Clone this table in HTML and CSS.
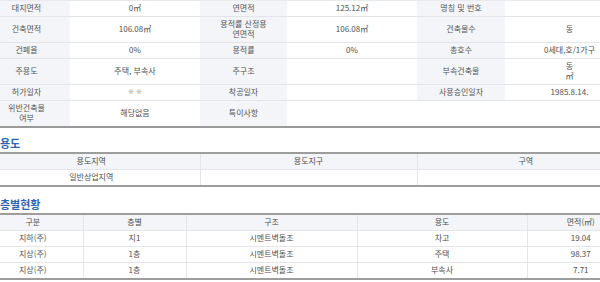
FILE: index.html
```html
<!DOCTYPE html>
<html lang="ko">
<head>
<meta charset="utf-8">
<link rel="stylesheet" href="styles.css">
</head>
<body>
<div class="page">
  <table class="info">
    <colgroup>
      <col class="c87"><col class="c130"><col class="c87"><col class="c130"><col class="c88"><col class="c129">
    </colgroup>
    <tr>
      <th>대지면적</th><td>0㎡</td><th>연면적</th><td>125.12㎡</td><th>명칭 및 번호</th><td></td>
    </tr>
    <tr>
      <th>건축면적</th><td>106.08㎡</td><th>용적률 산정용<br>연면적</th><td>106.08㎡</td><th>건축물수</th><td>동</td>
    </tr>
    <tr>
      <th>건폐율</th><td>0%</td><th>용적률</th><td>0%</td><th>총호수</th><td>0세대,호/1가구</td>
    </tr>
    <tr>
      <th>주용도</th><td>주택, 부속사</td><th>주구조</th><td></td><th>부속건축물</th><td>동<br>㎡</td>
    </tr>
    <tr>
      <th>허가일자</th><td class="mark">※ ※</td><th>착공일자</th><td></td><th>사용승인일자</th><td>1985.8.14.</td>
    </tr>
    <tr>
      <th>위반건축물<br>여부</th><td>해당없음</td><th>특이사항</th><td class="blank" colspan="3"></td>
    </tr>
  </table>

  <h2 class="sec first">용도</h2>
  <table class="grid">
    <colgroup><col class="c217"><col class="c217"><col class="c217"></colgroup>
    <tr class="head"><th>용도지역</th><th>용도지구</th><th>구역</th></tr>
    <tr><td>일반상업지역</td><td></td><td></td></tr>
  </table>

  <h2 class="sec">층별현황</h2>
  <table class="grid floors">
    <colgroup><col class="c100"><col class="c103"><col class="c171"><col class="c170"><col class="c107"></colgroup>
    <tr class="head"><th>구분</th><th>층별</th><th>구조</th><th>용도</th><th>면적(㎡)</th></tr>
    <tr><td>지하(주)</td><td>지1</td><td>시멘트벽돌조</td><td>차고</td><td>19.04</td></tr>
    <tr><td>지상(주)</td><td>1층</td><td>시멘트벽돌조</td><td>주택</td><td>98.37</td></tr>
    <tr><td>지상(주)</td><td>1층</td><td>시멘트벽돌조</td><td>부속사</td><td>7.71</td></tr>
  </table>
</div>
</body>
</html>
```
FILE: styles.css
```css
html, body {
  margin: 0;
  padding: 0;
  overflow: hidden;
  background: #ffffff;
}
body {
  font-family: "Noto Sans CJK KR", "Noto Sans", sans-serif;
  font-size: 8px;
  color: #505050;
}
.page {
  width: 651px;
  margin-left: -17px;
}
table {
  border-collapse: collapse;
  table-layout: fixed;
  width: 651px;
}
th, td {
  font-weight: normal;
  line-height: 10px;
  padding: 2px 2px 3px;
  text-align: center;
  border-bottom: 1px solid #e3e5e8;
  white-space: nowrap;
}
.c87 { width: 87px; }
.c88 { width: 88px; }
.c130 { width: 130px; }
.c129 { width: 129px; }
.c217 { width: 217px; }
.c100 { width: 100px; }
.c103 { width: 103px; }
.c171 { width: 171px; }
.c170 { width: 170px; }
.c107 { width: 107px; }

.info {
  border-top: 1px solid #e8eaed;
  border-bottom: 2px solid #9a9a9a;
}
.info th {
  background: #f3f5f8;
  color: #555555;
}
.info tr:last-child th,
.info tr:last-child td {
  border-bottom: none;
}
.info .mark {
  font-family: "DejaVu Sans", sans-serif;
  color: #a8a8a8;
  font-size: 7px;
}

.sec {
  margin: 6px 0 0;
  padding-left: 17px;
  font-size: 11px;
  line-height: 18px;
  font-weight: bold;
  color: #2f66b3;
}
.grid + .sec { margin-top: 8px; }

.grid {
  border-top: 2px solid #9d9d9d;
  border-bottom: 2px solid #9d9d9d;
}
.grid th, .grid td {
  border-right: 1px solid #e3e5e8;
}
.grid th:last-child, .grid td:last-child {
  border-right: none;
}
.grid tr:last-child td {
  border-bottom: none;
}
.grid .head th {
  background: #f3f5f8;
}
```
